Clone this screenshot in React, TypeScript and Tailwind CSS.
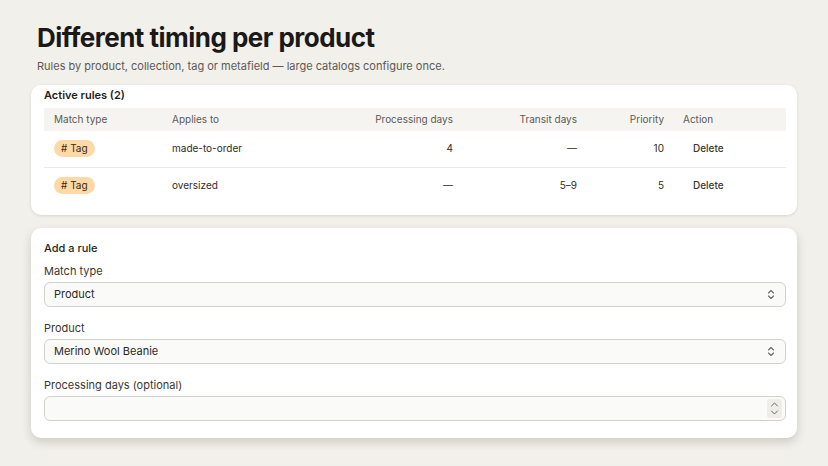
const rules = [
  { type: 'Tag', target: 'made-to-order', processing: '4', transit: '—', priority: '10' },
  { type: 'Tag', target: 'oversized', processing: '—', transit: '5–9', priority: '5' },
];

function UpDown() {
  return (
    <svg width="8" height="11" viewBox="0 0 8 11" fill="none" stroke="#6b6760" strokeWidth="1.1" strokeLinecap="round" strokeLinejoin="round">
      <path d="M1.5 4 L4 1.5 L6.5 4" />
      <path d="M1.5 7 L4 9.5 L6.5 7" />
    </svg>
  );
}

function Select({ value }: { value: string }) {
  return (
    <div className="h-[25px] rounded-[6px] border border-[#d4d1cb] bg-[#fafaf8] flex items-center justify-between pl-[9px] pr-[10px] text-[11px] text-[#2b2926]">
      <span>{value}</span>
      <UpDown />
    </div>
  );
}

export default function App() {
  return (
    <div
      className="w-[828px] h-[466px] bg-[#f2f0eb] overflow-hidden"
      style={{ fontFamily: 'Inter, "Noto Sans", sans-serif' }}
    >
      <div className="pl-[37px] pt-[22px]">
        <h1 className="text-[26px] leading-[32px] font-bold tracking-[-0.02em] text-[#1a1917]">
          Different timing per product
        </h1>
        <p className="mt-[4px] text-[11px] leading-[16px] text-[#5c5955]">
          Rules by product, collection, tag or metafield — large catalogs configure once.
        </p>
      </div>

      <div className="ml-[31px] w-[766px] mt-[11px]">
        {/* active rules */}
        <div className="bg-white rounded-[10px] shadow-[0_1px_3px_rgba(60,50,30,0.14)] pl-[13px] pr-[11px] pt-[3px] pb-[12px]">
          <div className="text-[11px] font-semibold text-[#1f1d1a] leading-[14px]">Active rules (2)</div>
          <table className="w-full mt-[6px] text-[10px] text-[#2d2b28] border-collapse">
            <thead>
              <tr className="bg-[#f5f4f1] text-[#5e5a55] h-[23px]">
                <th className="text-left font-normal pl-[10px] w-[128px]">Match type</th>
                <th className="text-left font-normal">Applies to</th>
                <th className="text-right font-normal">Processing days</th>
                <th className="text-right font-normal w-[124px]">Transit days</th>
                <th className="text-right font-normal w-[87px]">Priority</th>
                <th className="text-left font-normal pl-[19px] w-[122px]">Action</th>
              </tr>
            </thead>
            <tbody>
              {rules.map((r, i) => (
                <tr key={r.target} className={i === 0 ? 'h-[36px] border-b border-[#ece9e4]' : 'h-[36px]'}>
                  <td className="pl-[10px]">
                    <span className="inline-flex items-center h-[17px] px-[7px] rounded-full bg-[#fcd9a6] text-[#3d2a12] text-[10px]">
                      # Tag
                    </span>
                  </td>
                  <td>{r.target}</td>
                  <td className="text-right">{r.processing}</td>
                  <td className="text-right">{r.transit}</td>
                  <td className="text-right">{r.priority}</td>
                  <td className="pl-[29px] font-medium text-[#3a3733]">Delete</td>
                </tr>
              ))}
            </tbody>
          </table>
        </div>

        {/* add rule */}
        <div className="mt-[13px] bg-white rounded-[10px] shadow-[0_4px_10px_rgba(60,50,30,0.2)] pl-[13px] pr-[11px] pt-[12px] pb-[17px]">
          <div className="text-[11px] font-medium text-[#1f1d1a] leading-[16px]">Add a rule</div>
          <div className="mt-[7px] text-[11px] text-[#3a3733] leading-[16px]">Match type</div>
          <div className="mt-[3px]">
            <Select value="Product" />
          </div>
          <div className="mt-[13px] text-[11px] text-[#3a3733] leading-[16px]">Product</div>
          <div className="mt-[3px]">
            <Select value="Merino Wool Beanie" />
          </div>
          <div className="mt-[13px] text-[11px] text-[#3a3733] leading-[16px]">Processing days (optional)</div>
          <div className="mt-[3px] h-[25px] rounded-[6px] border border-[#d4d1cb] bg-[#fafaf8] flex items-center justify-end pr-[3px]">
            <div className="w-[15px] h-[19px] rounded-[3px] bg-[#efede8] flex items-center justify-center">
              <svg width="9" height="15" viewBox="0 0 9 15" fill="none" stroke="#6b6760" strokeWidth="1" strokeLinecap="round" strokeLinejoin="round">
                <path d="M1.5 5 L4.5 2 L7.5 5" />
                <path d="M1.5 10 L4.5 13 L7.5 10" />
              </svg>
            </div>
          </div>
        </div>
      </div>
    </div>
  );
}
